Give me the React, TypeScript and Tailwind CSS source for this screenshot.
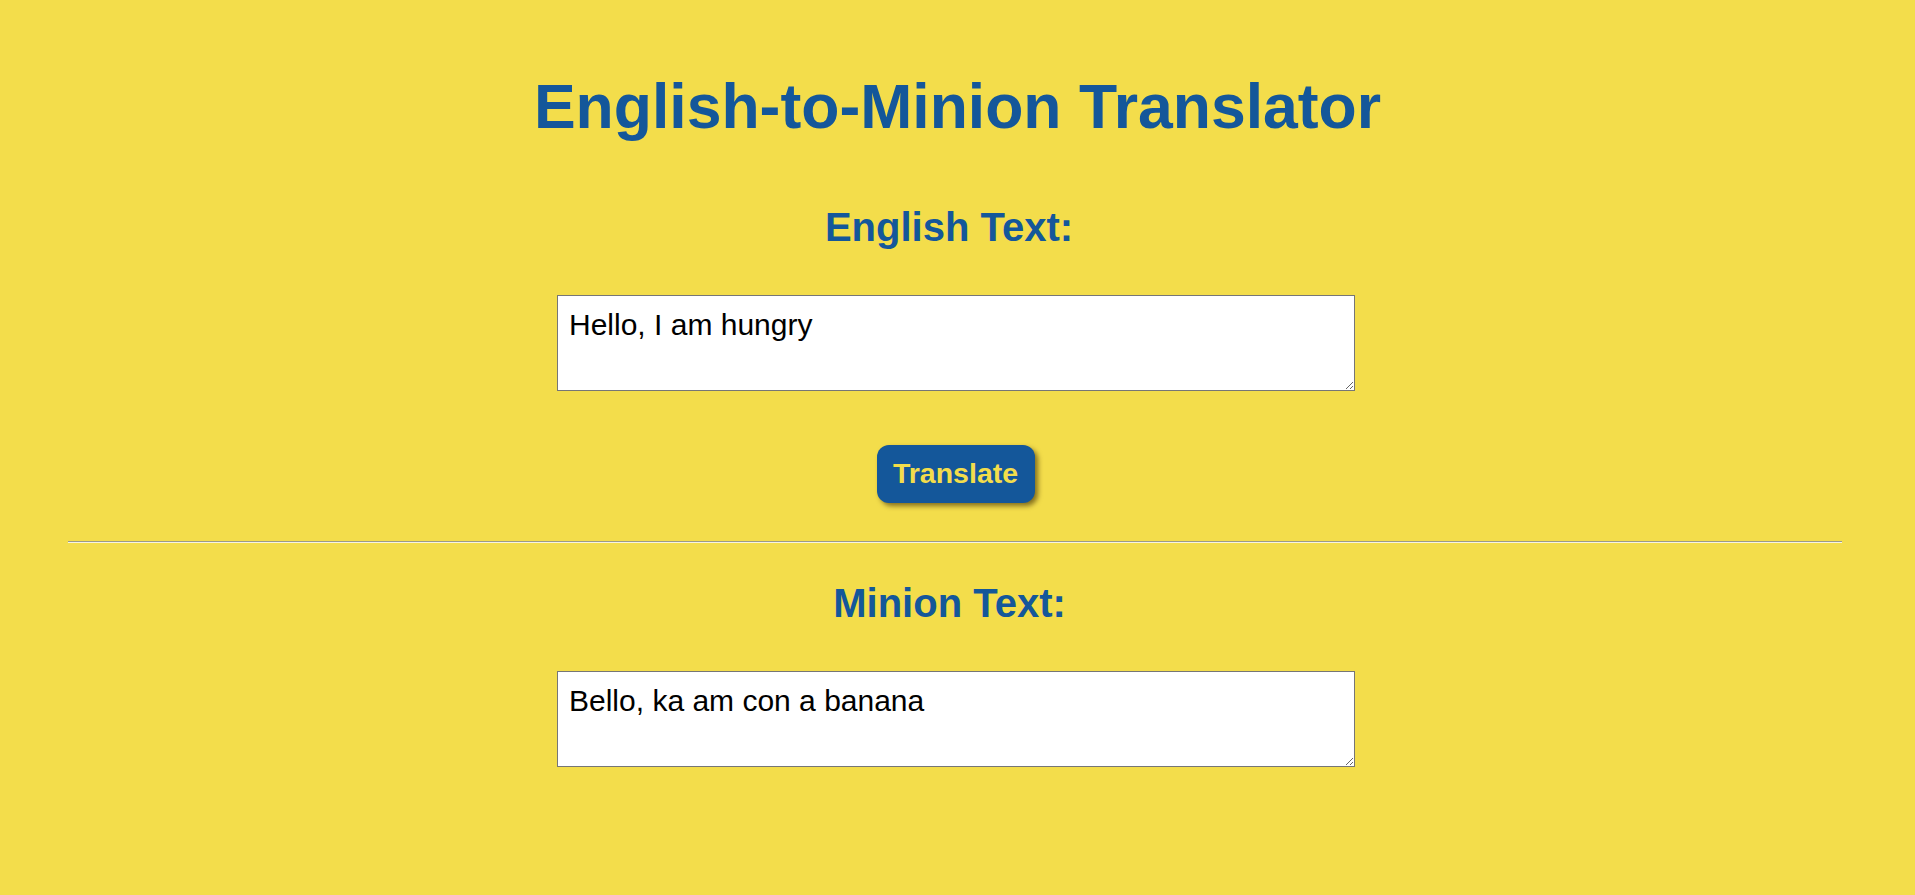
import { useState } from "react";

const font = { fontFamily: '"Liberation Sans", Arial, sans-serif' };

function TextBox({ value, onChange }: { value: string; onChange?: (v: string) => void }) {
  return (
    <textarea
      value={value}
      onChange={(e) => onChange?.(e.target.value)}
      readOnly={!onChange}
      className="block h-[96px] w-[798px] resize-y border border-[#767676] bg-white pt-[12px] pr-[10px] pb-[10px] pl-[11px] text-[30px] leading-[1.15] text-black outline-none"
      style={font}
    />
  );
}

export default function App() {
  const [english, setEnglish] = useState("Hello, I am hungry");
  const [minion] = useState("Bello, ka am con a banana");

  return (
    <div className="flex min-h-[895px] w-full flex-col items-center bg-[#f3dd4b] pt-[71px]" style={font}>
      <h1 className="text-[62.5px] leading-[1.15] font-bold text-[#14579a]">English-to-Minion Translator</h1>

      <h2 className="mt-[61px] mr-[17px] text-[40px] leading-[1.15] font-bold text-[#14579a]">English Text:</h2>
      <div className="mt-[45px] mr-[3px]">
        <TextBox value={english} onChange={setEnglish} />
      </div>

      <button className="mt-[54px] mr-[4px] h-[58px] w-[158px] rounded-[12px] bg-[#14579a] text-[28.5px] leading-[1.15] font-bold text-[#f3dd4b] shadow-[3px_3px_5px_rgba(60,40,0,0.6)]">
        Translate
      </button>

      <hr className="mt-[38px] ml-[68px] mr-[73px] h-0 self-stretch border-t border-b border-t-[#9a9a8a] border-b-[#f8f4e0]" />

      <h2 className="mt-[37px] mr-[16px] text-[40px] leading-[1.15] font-bold text-[#14579a]">Minion Text:</h2>
      <div className="mt-[45px] mr-[3px]">
        <TextBox value={minion} />
      </div>
    </div>
  );
}
